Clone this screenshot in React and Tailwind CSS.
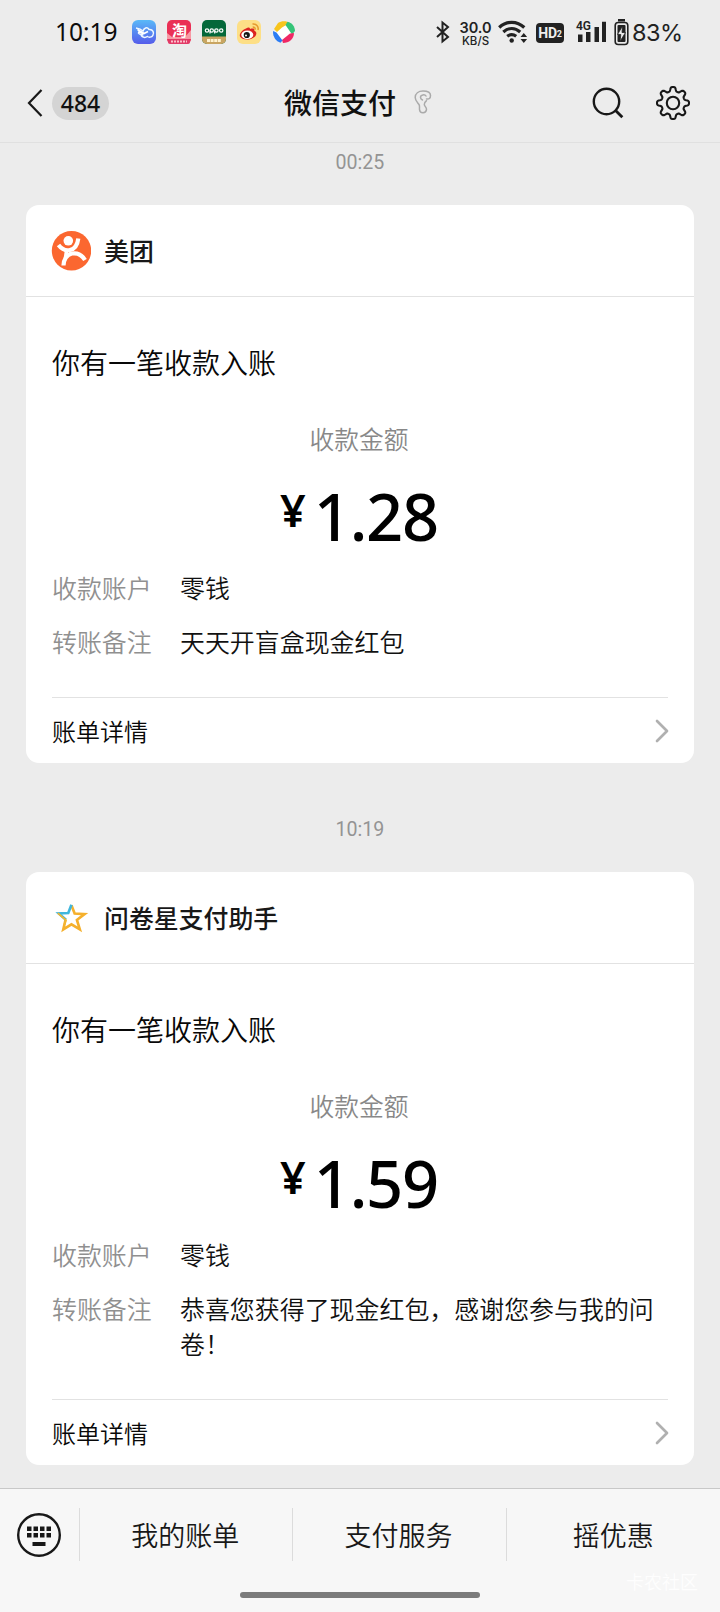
import { ChevronRight } from 'lucide-react';

const bills = [
  {
    time: '00:25',
    name: '美团',
    logo: <MeituanLogo />,
    amount: '1.28',
    note: '天天开盲盒现金红包',
  },
  {
    time: '10:19',
    name: '问卷星支付助手',
    logo: <StarLogo />,
    amount: '1.59',
    note: '恭喜您获得了现金红包，感谢您参与我的问卷！',
  },
];

function MeituanLogo() {
  return (
    <svg width="40" height="40" viewBox="0 0 40 40">
      <circle cx="20.5" cy="19.7" r="19.7" fill="#fb6730" />
      <circle cx="17.3" cy="9.8" r="4.8" fill="#fff" />
      <g fill="none" stroke="#fff" strokeWidth="4.2">
        <path d="M7.5 14c3.5 4.5 7 6 11.5 5 4.5-1 7.5-5 8.3-11.5" />
        <path d="M12.5 34.5C12.5 29 15.5 23.500 21 22.500c5.500-1 10 1.500 13 6.500" />
        <path d="M15.8 18l-1.3 9" strokeWidth="3.6" />
      </g>
    </svg>
  );
}

function StarLogo() {
  return (
    <svg width="40" height="40" viewBox="-2 -1 44 44" fill="none" strokeWidth="2.9">
      <path d="M20.5 7l3.5 9 11 .7-8.5 6.5 3.2 10.3-9.2-5.5-9 5.5 2.5-10.5" stroke="#f5b02c" />
      <path d="M14.5 23L6.5 16l10.5-.5 3.5-9" stroke="#3fb6dc" />
      <path d="M5.5 15.7l8.8 7.5-1.5 5" stroke="#f2b632" strokeWidth="2" />
    </svg>
  );
}

function AppIcons() {
  return (
    <div className="ml-[16px] flex gap-[11px]">
      <svg width="24" height="24" viewBox="0 0 24 24">
        <defs>
          <linearGradient id="bird" x1="0" y1="0" x2="0" y2="1">
            <stop offset="0" stopColor="#5ab9f8" />
            <stop offset="1" stopColor="#555cea" />
          </linearGradient>
        </defs>
        <rect width="24" height="24" rx="6" fill="url(#bird)" />
        <path d="M4 8c3.500.5 5.500 1.500 7 3 1-3 4-4.500 6-1.500 4-.5 5.500 3.500 3.800 6-1 2-4 2-5.500 1-2 1.500-5 1-6-.8l2-1c-3 0-4.500-.7-5-2" fill="none" stroke="#f0f8ff" strokeWidth="1.5" />
        <path d="M5.5 9.500L12 13.500l4-2M6 12l5 1.500" fill="none" stroke="#fff" strokeWidth="1.7" />
      </svg>
      <svg width="24" height="24" viewBox="0 0 24 24">
        <rect width="24" height="24" rx="5" fill="#ea2f55" />
        <path d="M0 13l5 4h13l6-7v9H0z" fill="#f799a4" />
        <rect x="1" y="19" width="22" height="5" rx="2" fill="#e23a67" />
        <text x="12.5" y="16" fontSize="15" fontWeight="700" textAnchor="middle" fill="#fff">淘</text>
        <path d="M4 21.500h16" stroke="#fbc0ca" strokeWidth="2" strokeDasharray="2 1" />
      </svg>
      <svg width="24" height="24" viewBox="0 0 24 24">
        <rect width="24" height="24" rx="5" fill="#04683a" />
        <path d="M0 16.500h24V19a5 5 0 0 1-5 5H5a5 5 0 0 1-5-5z" fill="#c9a562" />
        <g fill="none" stroke="#fff" strokeWidth="1.2">
          <circle cx="5" cy="10.5" r="1.7" />
          <circle cx="9.7" cy="10.5" r="1.7" />
          <path d="M8 10.500v3M12.700 10.500v3" />
          <circle cx="14.4" cy="10.5" r="1.7" />
          <circle cx="19.2" cy="10.5" r="1.7" />
        </g>
        <path d="M5 20.500h14" stroke="#fff3d0" strokeWidth="3" strokeDasharray="3 .6" />
      </svg>
      <svg width="24" height="24" viewBox="0 0 24 24">
        <rect width="24" height="24" rx="6" fill="#fddf86" />
        <path d="M9 8.500c2-1.500 4-1.500 4 .5 3-1 5-.3 4.300 1.800 2.700 1 2.700 4 .2 6.200-4 3.500-12.500 3.500-14.500-.5C1.800 13.500 6 9.500 9 8.500z" fill="#dc2420" />
        <ellipse cx="10.3" cy="14.8" rx="6" ry="4.3" fill="#fff" />
        <circle cx="9.8" cy="15" r="3.1" fill="#161616" />
        <circle cx="9" cy="15.5" r="1" fill="#fff" />
        <path d="M15.500 4c3.500-.5 6.500 2.500 5.500 6M15.700 7c1.800 0 2.800 1 2.400 2.600" fill="none" stroke="#e59a2c" strokeWidth="1.5" />
      </svg>
      <svg width="24" height="24" viewBox="0 0 24 24">
        <circle cx="12" cy="12" r="8.5" fill="#fff" />
        <path d="M6 3C9.500.5 15 .8 17.500 3L10 7.500 5 12 2 9z" fill="#f8c51d" />
        <path d="M15.500 1.800c4.500 1 7.300 4.500 7.500 9.200l-3 3.500L13.500 5z" fill="#35c478" />
        <path d="M22 13c0 6-5 10-11 10l-1-3 8-6.500z" fill="#f02865" />
        <path d="M1 11l3.500 1.500 6 8-2 2.200C4 21.500.8 17 1 11z" fill="#2b7cf4" />
      </svg>
    </div>
  );
}

function StatusBar() {
  return (
    <div className="flex h-16 items-center pl-[55px]">
      <span className="w-[61px] font-['Noto_Sans','Noto_Sans_CJK_SC',sans-serif] text-[24.5px] font-[450] leading-none text-[#0c0c0c]">10:19</span>
      <AppIcons />
      <svg className="ml-[140px]" width="14" height="24" viewBox="0 0 14 24" fill="none" stroke="#222" strokeWidth="2">
        <path d="M1 7l11 10-5.500 4.500v-19L12 7 1 17" />
      </svg>
      <div className="ml-[9px] mt-[2px] flex w-[33px] flex-col items-center font-['Inter',sans-serif] font-semibold text-[#222]">
        <span className="text-[14.5px] leading-[15px]">30.0</span>
        <span className="text-[11.5px] font-medium leading-[12px]">KB/S</span>
      </div>
      <svg className="ml-[6px]" width="30" height="26" viewBox="0 0 30 26" fill="none" stroke="#222" strokeWidth="3.2">
        <path d="M1.200 8.500C8.500 1.600 19 1.600 26.300 8.500M5.300 13C10.500 8.400 17 8.400 22.200 13M9.200 17.300c3-2.300 6-2.300 9 0" />
        <circle cx="13.7" cy="21.5" r="2.2" fill="#222" stroke="none" />
        <path d="M22.500 18l3.300-4 3.300 4zM22.500 20l3.300 4 3.300-4z" fill="#222" stroke="none" />
      </svg>
      <div className="ml-[8px] mt-[1px] flex h-[20px] w-[28px] items-center justify-center rounded-[4px] bg-[#222] font-['Roboto',sans-serif] text-[14px] font-bold leading-none tracking-[-0.3px] text-[#eee]">
        HD<span className="mt-[4px] text-[9px]">2</span>
      </div>
      <svg className="ml-[11px] overflow-visible" width="33" height="24" viewBox="0 0 33 24" fill="#222">
        <text x="1" y="10" fontSize="12" fontWeight="600" fontFamily="Roboto, sans-serif">4G</text>
        <path d="M3 14.500h4.500V22H3zM11 12h4.500v10H11zM19.500 7H24v15h-4.500zM27 1.800h4V22h-4z" />
      </svg>
      <svg className="ml-[6px]" width="15" height="28" viewBox="0 0 15 28">
        <rect x="4" y="1" width="7" height="2.5" fill="#222" />
        <rect x="1.2" y="4.5" width="12.6" height="22" rx="3" fill="none" stroke="#222" strokeWidth="1.6" />
        <rect x="3.5" y="7" width="8" height="17" rx="1" fill="#222" />
        <path d="M8.500 8L3.500 16.500h3.300L6 23.500l5.500-9H8z" fill="#ececec" stroke="#222" strokeWidth=".8" />
      </svg>
      <span className="ml-[3px] mt-[2px] font-['Inter',sans-serif] text-[23.5px] font-normal leading-none tracking-[-0.5px] text-[#222]">83%</span>
    </div>
  );
}

// eight rounded teeth around the hub
const gearPoints = Array.from({ length: 181 }, (_, i) => {
  const a = (i * 2 * Math.PI) / 180;
  const r = 13.9 + 2.1 * (Math.tanh(1.8 * Math.cos(8 * a)) / Math.tanh(1.8));
  return `${(18 + r * Math.cos(a)).toFixed(2)},${(18 + r * Math.sin(a)).toFixed(2)}`;
}).join(' ');

function NavBar() {
  return (
    <div className="flex h-[79px] items-center border-b border-[#e0e0e0]">
      <svg className="ml-[27px]" width="16" height="30" viewBox="0 0 16 30" fill="none" stroke="#181818" strokeWidth="2.2">
        <path d="M14.500 2L2 15l12.500 13" />
      </svg>
      <span className="ml-[9px] flex h-[33px] w-[57px] items-center justify-center rounded-full bg-[#d4d4d4] font-['Noto_Sans',sans-serif] text-[23px] font-medium leading-none text-[#111]">484</span>
      <h1 className="-mt-[2px] ml-[175px] w-[112px] whitespace-nowrap text-[28px] font-medium leading-none text-[#111]">微信支付</h1>
      <svg className="-mt-[2px] ml-[18px]" width="18" height="24" viewBox="0 0 18 24" fill="none" stroke="#aaa" strokeWidth="1.5" strokeLinecap="round">
        <path d="M12.500 9c2.500.5 4-.7 4-3.500C16.500 2.500 13 1 9 1 4.500 1 1.200 3.500 1.200 7.500c0 3.200 2.300 5 3.800 7 1 1.500.3 3 .5 5 .3 4.300 6.500 4.300 7 .2.2-2.500-2-3.200-2.200-5.200-.2-1.800 1-2.800 2.200-3.800" />
        <path d="M12 6c-1-1.800-5.500-1.500-5.500 1.500 0 1.500 1 2 2 2.500" />
      </svg>
      <svg className="ml-[160px]" width="32" height="32" viewBox="0 0 32 32" fill="none" stroke="#181818" strokeWidth="2.4">
        <circle cx="14.5" cy="14.5" r="12.7" />
        <path d="M23.300 23.300l7 7" strokeWidth="2.8" />
      </svg>
      <svg className="ml-[31px]" width="36" height="36" viewBox="0 0 36 36" fill="none" stroke="#181818" strokeWidth="2.1" strokeLinejoin="round">
        <polygon points={gearPoints} />
        <circle cx="18" cy="18" r="6.2" />
      </svg>
    </div>
  );
}

function Field({ label, value }) {
  return (
    <div className="flex text-[24.95px] leading-[35px]">
      <span className="w-[128px] shrink-0 text-[#909090]">{label}</span>
      <span className="w-[480px] text-[#111]">{value}</span>
    </div>
  );
}

function BillCard({ bill }) {
  return (
    <section className="rounded-[13px] bg-white">
      <div className="flex h-[92px] items-center border-b border-[#e2e2e2] pl-[25px]">
        {bill.logo}
        <h2 className="ml-[13px] text-[24.9px] font-medium leading-none text-[#181818]">{bill.name}</h2>
      </div>
      <div className="px-[26px] pt-[45px]">
        <p className="text-[28px] leading-[40px] text-[#080808]">你有一笔收款入账</p>
        <p className="mt-[38px] pr-[2px] text-center text-[24.8px] leading-[36px] text-[#888]">收款金额</p>
        <div className="mt-[28px] flex h-[64px] items-start justify-center pr-[2px] font-['Noto_Sans',sans-serif] leading-[64px] text-black">
          <span className="mr-[8px] text-[45px] font-semibold leading-[51px]">¥</span>
          <span className="text-[65px] font-medium tracking-[-1.3px]">{bill.amount}</span>
        </div>
        <div className="mt-[22px] flex flex-col gap-[19px]">
          <Field label="收款账户" value="零钱" />
          <Field label="转账备注" value={bill.note} />
        </div>
        <div className="mt-[38px] flex h-[66px] items-center justify-between border-t border-[#e2e2e2]">
          <span className="text-[24px] leading-none text-[#080808]">账单详情</span>
          <ChevronRight className="-mr-[14px] text-[#b0b0b0]" size={40} strokeWidth={1.6} />
        </div>
      </div>
    </section>
  );
}

function BottomBar() {
  return (
    <footer className="relative h-[124px] border-t border-[#c8c8c8] bg-[#f7f7f7]">
      <div className="flex items-center pt-[19px]">
        <div className="flex h-[53px] w-[80px] items-center border-r border-[#dcdcdc] pl-[17px]">
          <svg width="44" height="44" viewBox="0 0 44 44" fill="#181818">
            <circle cx="22" cy="22" r="20.8" fill="none" stroke="#181818" strokeWidth="2.4" />
            <path d="M10 13.500h4.500V18H10zM16.500 13.500H21V18h-4.500zM23 13.500h4.500V18H23zM29.500 13.500H34V18h-4.500zM10 20h4.500v4.500H10zM16.500 20H21v4.500h-4.500zM23 20h4.500v4.500H23zM29.500 20H34v4.500h-4.500zM15.500 29h13v4h-13z" />
          </svg>
        </div>
        <nav className="grid h-[53px] flex-1 grid-cols-3 text-[27px] leading-[53px] text-[#181818]">
          <span className="border-r border-[#dcdcdc] pr-[2px] text-center">我的账单</span>
          <span className="border-r border-[#dcdcdc] pr-[2px] text-center">支付服务</span>
          <span className="text-center">摇优惠</span>
        </nav>
      </div>
      <div className="mx-auto mt-[31px] h-[6px] w-[240px] rounded-full bg-[#7b7b7b]" />
      <span className="absolute right-[22px] top-[80px] text-[18px] leading-[24px] text-[#fefefe]">卡农社区</span>
    </footer>
  );
}

export default function App() {
  return (
    <div className="flex h-[1612px] w-[720px] flex-col overflow-hidden bg-[#ececec] font-['Noto_Sans_CJK_SC',sans-serif] font-[350]">
      <StatusBar />
      <NavBar />
      <main className="flex flex-1 flex-col px-[26px]">
        {bills.map((bill, i) => (
          <div key={bill.time}>
            <time className={`block text-center font-['Roboto',sans-serif] text-[19.6px] font-normal text-[#949494] ${i === 0 ? 'h-[62px] leading-[40px]' : 'h-[109px] leading-[134px]'}`}>
              {bill.time}
            </time>
            <BillCard bill={bill} />
          </div>
        ))}
      </main>
      <BottomBar />
    </div>
  );
}
